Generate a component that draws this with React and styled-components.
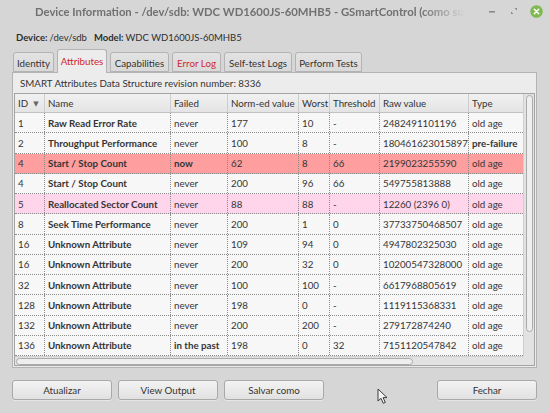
import React from 'react';
import styled, { createGlobalStyle } from 'styled-components';

const GlobalStyle = createGlobalStyle`
  html, body {
    margin: 0;
    padding: 0;
    background: #d6d6d6;
  }
  body {
    font-family: Lato, "Noto Sans", "DejaVu Sans", sans-serif;
    font-size: 9.75px;
    color: #3a3a3a;
  }
`;

const TEXT = '9.75px';

const Window = styled.div`
  width: 550px;
  height: 413px;
  display: flex;
  flex-direction: column;
  background: #d6d6d6;
  overflow: hidden;
  position: relative;
`;

const TitleBar = styled.div`
  height: 22px;
  flex-shrink: 0;
  display: flex;
  align-items: center;
  padding-left: 35px;
  padding-right: 3px;
`;

const Title = styled.div`
  width: 430px;
  font-size: 11.3px;
  font-weight: 700;
  color: #707070;
  white-space: nowrap;
  overflow: hidden;
  -webkit-mask-image: linear-gradient(to right, #000 90%, transparent 100%);
  mask-image: linear-gradient(to right, #000 90%, transparent 100%);
`;

const Controls = styled.div`
  margin-left: auto;
  display: flex;
  align-items: center;
`;

const ControlBox = styled.div`
  width: 22px;
  height: 22px;
  display: flex;
  align-items: center;
  justify-content: center;
`;

const Body = styled.div`
  flex: 1;
  display: flex;
  flex-direction: column;
  padding: 0 13px 0 12px;
`;

const DeviceLine = styled.div`
  height: 14px;
  margin-top: 8px;
  padding-left: 4px;
  display: flex;
  align-items: center;
  gap: 2px;
  font-size: 9.5px;
  color: #2e2e2e;
  white-space: nowrap;
`;

const Bold = styled.b`
  font-weight: 700;
`;

const Spacer = styled.span`
  width: 3px;
`;

const Tabs = styled.div`
  height: 23px;
  margin-top: 5px;
  padding-left: 1px;
  display: flex;
  align-items: flex-end;
  gap: 3px;
  position: relative;
  z-index: 1;
`;

const Tab = styled.div`
  width: ${p => p.$w}px;
  height: ${p => (p.$active ? 24 : 20)}px;
  margin-bottom: ${p => (p.$active ? -1 : 0)}px;
  box-sizing: border-box;
  display: flex;
  align-items: center;
  justify-content: center;
  padding-top: ${p => (p.$active ? 0 : 1)}px;
  padding-bottom: ${p => (p.$active ? 2 : 0)}px;
  border: 1px solid #b3b3b3;
  border-bottom: ${p => (p.$active ? 'none' : '1px solid #b3b3b3')};
  border-radius: 3px 3px 0 0;
  background: ${p => (p.$active ? '#ececec' : 'linear-gradient(#e2e2e2, #d9d9d9)')};
  color: ${p => (p.$red ? '#cf2a2f' : '#333')};
  font-size: ${TEXT};
  white-space: nowrap;
`;

const Panel = styled.div`
  height: 296px;
  box-sizing: border-box;
  border: 1px solid #b3b3b3;
  background: #ececec;
  padding: 0 1px 1px 1px;
  display: flex;
  flex-direction: column;
`;

const Revision = styled.div`
  height: 14px;
  margin: 3px 0 3px 6px;
  display: flex;
  align-items: center;
  font-size: ${TEXT};
  color: #333;
  white-space: nowrap;
`;

const Frame = styled.div`
  flex: 1;
  border: 1px solid #a4a4a4;
  display: grid;
  grid-template-columns: 1fr 11px;
  grid-template-rows: 1fr 9px;
  overflow: hidden;
  background: #f7f7f7;
`;

const Tree = styled.div`
  overflow: hidden;
  display: flex;
  flex-direction: column;
`;

const COLS = '30px 126px 57px 71px 31px 50px 89px 80px';

const HeaderRow = styled.div`
  height: 19px;
  flex-shrink: 0;
  box-sizing: border-box;
  display: grid;
  grid-template-columns: ${COLS};
  background: linear-gradient(#f1f1f1, #e4e4e4);
  border-bottom: 1px solid #c2c2c2;
`;

const HeaderCell = styled.div`
  display: flex;
  align-items: center;
  gap: 5px;
  padding-left: 3px;
  border-right: 1px solid #cdcdcd;
  white-space: nowrap;
  overflow: hidden;
  color: #333;
  font-size: ${TEXT};
`;

const SortArrow = styled.span`
  font-size: 7px;
  color: #666;
`;

const ROW_BG = {
  normal: '#f7f7f7',
  red: '#fe9e9e',
  pink: '#ffd5ec',
};

const Row = styled.div`
  height: 20.25px;
  flex-shrink: 0;
  box-sizing: border-box;
  display: grid;
  grid-template-columns: ${COLS};
  background: ${p => ROW_BG[p.$tone]};
  border-bottom: 1px dotted #8c8c8c;
`;

const Cell = styled.div`
  display: flex;
  align-items: center;
  padding-left: 3px;
  border-right: 1px dotted #8c8c8c;
  white-space: nowrap;
  overflow: hidden;
  font-size: ${TEXT};
  font-weight: ${p => (p.$bold ? 700 : 400)};
  color: #353535;
`;

const VScroll = styled.div`
  background: #e2e2e2;
  border-left: 1px solid #d0d0d0;
  padding: 1px 1px 0 2px;
`;

const VThumb = styled.div`
  height: 237px;
  box-sizing: border-box;
  border: 1px solid #aaaaaa;
  border-radius: 4px;
  background: #eeeeee;
`;

const HScroll = styled.div`
  background: #e2e2e2;
  border-top: 1px solid #d0d0d0;
  padding: 1px 0 0 1px;
`;

const HThumb = styled.div`
  width: 397px;
  height: 7px;
  box-sizing: border-box;
  border: 1px solid #aaaaaa;
  border-radius: 4px;
  background: #eeeeee;
`;

const Corner = styled.div`
  background: #e2e2e2;
`;

const ButtonRow = styled.div`
  margin-top: 12px;
  display: flex;
  gap: 6px;
`;

const Button = styled.div`
  width: 100px;
  height: 20px;
  box-sizing: border-box;
  margin-left: ${p => (p.$pushRight ? 'auto' : '0')};
  border: 1px solid #a9a9a9;
  border-radius: 3px;
  background: linear-gradient(#f3f3f3, #e1e1e1);
  display: flex;
  align-items: center;
  justify-content: center;
  color: #333;
  font-size: ${TEXT};
  box-shadow: 0 1px 0 rgba(255, 255, 255, 0.4);
`;

const Cursor = styled.svg`
  position: absolute;
  left: 377px;
  top: 388px;
`;

const rows = [
  ['1', 'Raw Read Error Rate', 'never', '177', '10', '-', '2482491101196', 'old age'],
  ['2', 'Throughput Performance', 'never', '100', '8', '-', '180461623015897', 'pre-failure', { boldType: true }],
  ['4', 'Start / Stop Count', 'now', '62', '8', '66', '2199023255590', 'old age', { tone: 'red', boldFailed: true }],
  ['4', 'Start / Stop Count', 'never', '200', '96', '66', '549755813888', 'old age'],
  ['5', 'Reallocated Sector Count', 'never', '88', '88', '-', '12260 (2396 0)', 'old age', { tone: 'pink' }],
  ['8', 'Seek Time Performance', 'never', '200', '1', '0', '37733750468507', 'old age'],
  ['16', 'Unknown Attribute', 'never', '109', '94', '0', '4947802325030', 'old age'],
  ['16', 'Unknown Attribute', 'never', '200', '32', '0', '10200547328000', 'old age'],
  ['32', 'Unknown Attribute', 'never', '100', '100', '-', '6617968805619', 'old age'],
  ['128', 'Unknown Attribute', 'never', '198', '0', '-', '1119115368331', 'old age'],
  ['132', 'Unknown Attribute', 'never', '200', '200', '-', '279172874240', 'old age'],
  ['136', 'Unknown Attribute', 'in the past', '198', '0', '32', '7151120547842', 'old age', { boldFailed: true }],
];

const tabs = [
  { label: 'Identity', w: 41 },
  { label: 'Attributes', w: 50, active: true, red: true },
  { label: 'Capabilities', w: 59 },
  { label: 'Error Log', w: 49, red: true },
  { label: 'Self-test Logs', w: 68 },
  { label: 'Perform Tests', w: 67 },
];

export default function App() {
  return (
    <Window>
      <GlobalStyle />
      <TitleBar>
        <Title>Device Information - /dev/sdb: WDC WD1600JS-60MHB5 - GSmartControl (como super-usuário)</Title>
        <Controls>
          <ControlBox>
            <svg width="8" height="3" viewBox="0 0 8 3"><rect x="1" y="1" width="6" height="1.6" fill="#8a8a8a" /></svg>
          </ControlBox>
          <ControlBox>
            <svg width="8" height="8" viewBox="0 0 8 8">
              <path d="M4.5 1 H7 V3.5 Z M3.5 7 H1 V4.5 Z" fill="#8a8a8a" />
            </svg>
          </ControlBox>
          <ControlBox>
            <svg width="13" height="13" viewBox="0 0 13 13">
              <circle cx="6.5" cy="6.5" r="6.3" fill="#80b950" />
              <path d="M4.3 4.3 L8.7 8.7 M8.7 4.3 L4.3 8.7" stroke="#ffffff" strokeWidth="1.5" strokeLinecap="round" />
            </svg>
          </ControlBox>
        </Controls>
      </TitleBar>

      <Body>
        <DeviceLine>
          <Bold>Device:</Bold>
          <span>/dev/sdb</span>
          <Spacer />
          <Bold>Model:</Bold>
          <span>WDC WD1600JS-60MHB5</span>
        </DeviceLine>

        <Tabs>
          {tabs.map(t => (
            <Tab key={t.label} $w={t.w} $active={t.active} $red={t.red}>{t.label}</Tab>
          ))}
        </Tabs>

        <Panel>
          <Revision>SMART Attributes Data Structure revision number: 8336</Revision>
          <Frame>
            <Tree>
              <HeaderRow>
                <HeaderCell>ID <SortArrow>▼</SortArrow></HeaderCell>
                <HeaderCell>Name</HeaderCell>
                <HeaderCell>Failed</HeaderCell>
                <HeaderCell>Norm-ed value</HeaderCell>
                <HeaderCell>Worst</HeaderCell>
                <HeaderCell>Threshold</HeaderCell>
                <HeaderCell>Raw value</HeaderCell>
                <HeaderCell>Type</HeaderCell>
              </HeaderRow>
              {rows.map((r, i) => {
                const opt = r[8] || {};
                return (
                  <Row key={i} $tone={opt.tone || 'normal'}>
                    <Cell>{r[0]}</Cell>
                    <Cell $bold>{r[1]}</Cell>
                    <Cell $bold={opt.boldFailed}>{r[2]}</Cell>
                    <Cell>{r[3]}</Cell>
                    <Cell>{r[4]}</Cell>
                    <Cell>{r[5]}</Cell>
                    <Cell>{r[6]}</Cell>
                    <Cell $bold={opt.boldType}>{r[7]}</Cell>
                  </Row>
                );
              })}
            </Tree>
            <VScroll><VThumb /></VScroll>
            <HScroll><HThumb /></HScroll>
            <Corner />
          </Frame>
        </Panel>

        <ButtonRow>
          <Button>Atualizar</Button>
          <Button>View Output</Button>
          <Button>Salvar como</Button>
          <Button $pushRight>Fechar</Button>
        </ButtonRow>
      </Body>

      <Cursor width="12" height="17" viewBox="0 0 12 17">
        <path d="M1 1 L1 13 L4 10.3 L6.3 15.3 L8.3 14.4 L6.1 9.6 L10 9.6 Z" fill="#f4f4f4" stroke="#3a3a3a" strokeWidth="1" strokeLinejoin="round" />
      </Cursor>
    </Window>
  );
}
